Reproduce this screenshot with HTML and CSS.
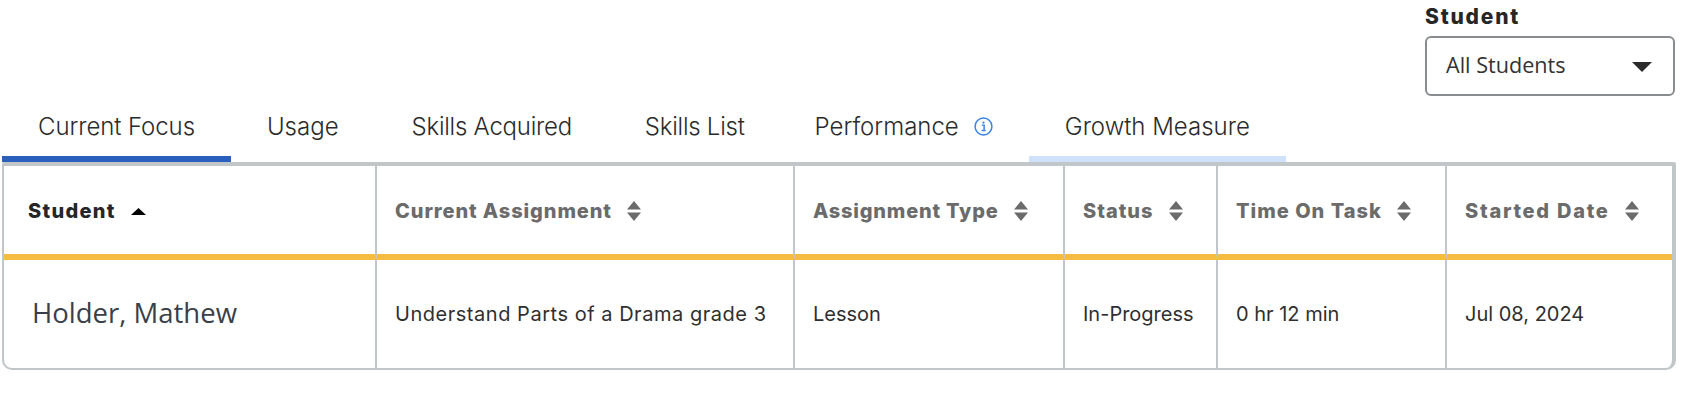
FILE: index.html
```html
<!DOCTYPE html>
<html lang="en">
<head>
<meta charset="utf-8">
<title>Current Focus</title>
<link rel="stylesheet" href="styles.css">
</head>
<body>
<div class="filter-bar">
  <div class="filter">
    <div class="filter-label">Student</div>
    <div class="select">
      <span class="select-text">All Students</span>
      <svg class="select-caret" width="20" height="10" viewBox="0 0 20 10"><path d="M0 0H20L10 10Z"/></svg>
    </div>
  </div>
</div>
<nav class="tabs">
  <div class="tab active tab-tight">Current Focus</div>
  <div class="tab">Usage</div>
  <div class="tab tab-narrow tab-acquired">Skills Acquired</div>
  <div class="tab tab-narrow tab-list">Skills List</div>
  <div class="tab">Performance
    <svg class="info" width="19" height="19" viewBox="0 0 18 18"><circle cx="9" cy="9" r="8" fill="none" stroke="#3b82e8" stroke-width="1.4"/><circle cx="9" cy="5.3" r="1.1" fill="#3b82e8"/><path d="M7.3 7.7H9.6V12.6M7.2 12.8H11" fill="none" stroke="#3b82e8" stroke-width="1.4"/></svg>
  </div>
  <div class="tab hover">Growth Measure</div>
</nav>
<div class="table-wrap">
  <table class="report">
    <thead>
      <tr>
        <th class="sorted"><span class="th-in">Student <svg class="sort" width="15" height="20" viewBox="0 0 15 20"><path d="M0 14H15L7.5 7Z"/></svg></span></th>
        <th class="th-current"><span class="th-in">Current Assignment <svg class="sort" width="14" height="20" viewBox="0 0 14 20"><path d="M0 8.5H14L7 0ZM0 11.5H14L7 20Z"/></svg></span></th>
        <th class="th-type"><span class="th-in">Assignment Type <svg class="sort" width="14" height="20" viewBox="0 0 14 20"><path d="M0 8.5H14L7 0ZM0 11.5H14L7 20Z"/></svg></span></th>
        <th><span class="th-in">Status <svg class="sort" width="14" height="20" viewBox="0 0 14 20"><path d="M0 8.5H14L7 0ZM0 11.5H14L7 20Z"/></svg></span></th>
        <th><span class="th-in">Time On Task <svg class="sort" width="14" height="20" viewBox="0 0 14 20"><path d="M0 8.5H14L7 0ZM0 11.5H14L7 20Z"/></svg></span></th>
        <th class="th-date"><span class="th-in">Started Date <svg class="sort" width="14" height="20" viewBox="0 0 14 20"><path d="M0 8.5H14L7 0ZM0 11.5H14L7 20Z"/></svg></span></th>
      </tr>
    </thead>
    <tbody>
      <tr>
        <td class="name">Holder, Mathew</td>
        <td class="assignment">Understand Parts of a Drama grade 3</td>
        <td>Lesson</td>
        <td>In-Progress</td>
        <td>0 hr 12 min</td>
        <td>Jul 08, 2024</td>
      </tr>
    </tbody>
  </table>
</div>
</body>
</html>
```
FILE: styles.css
```css
* { box-sizing: border-box; }
html, body { margin: 0; padding: 0; background: #fff; }
body { width: 1692px; height: 406px; overflow: hidden; font-family: "Inter", sans-serif; color: #2b2b2b; }

.filter-bar { display: flex; justify-content: flex-end; padding: 5px 17px 0 0; }
.filter { width: 250px; }
.filter-label { font-size: 21px; font-weight: 800; line-height: 24px; letter-spacing: 1.8px; color: #262626; height: 31px; }
.select { height: 60px; border: 2px solid #8a8d8f; border-radius: 6px; display: flex; align-items: center; justify-content: space-between; padding: 0 21px 0 19px; font-family: "Open Sans", sans-serif; font-size: 21.6px; color: #333; }
.select-text { margin-top: -4px; }
.select-caret { fill: #2b2b2b; margin-top: 1px; }

.tabs { display: flex; margin: 1px 0 0 2px; }
.tab { height: 65px; padding: 0 36px; display: flex; align-items: center; gap: 15px; border-bottom: 6px solid transparent; font-size: 24px; font-weight: 300; color: #2b2b2b; white-space: nowrap; }
.tab.active { border-bottom-color: #2a5fbd; }
.tab.hover { border-bottom-color: #d0e1fb; }
.tab-tight { letter-spacing: -0.08px; }
.tab-narrow { letter-spacing: -0.25px; }
.tab-acquired { padding-left: 37px; }
.tab-list { padding: 0 34px 0 37px; }
.info { flex: none; }

.table-wrap { margin: 0 16px 0 2px; width: 1674px; height: 208px; border: solid #c1c6c9; border-width: 4px 4px 2px 2px; border-radius: 2px 2px 10px 10px; overflow: hidden; }
.report { border-collapse: separate; border-spacing: 0; table-layout: fixed; width: 1668px; }
.report th:nth-child(1) { width: 373px; }
.report th:nth-child(2) { width: 418px; }
.report th:nth-child(3) { width: 270px; }
.report th:nth-child(4) { width: 153px; }
.report th:nth-child(5) { width: 229px; }
.report th, .report td { border-right: 2px solid #c1c6c9; padding: 0 0 0 18px; text-align: left; white-space: nowrap; }
.report th:last-child, .report td:last-child { border-right: 0; }
.report th { height: 94px; padding-top: 2px; border-bottom: 6px solid #f5bc3f; font-size: 20px; font-weight: 800; letter-spacing: 1px; color: #6b6b6b; }
.report th.sorted { color: #262626; padding-left: 24px; letter-spacing: 1.3px; }
.report th.th-current { letter-spacing: 0.9px; }
.report th.th-type { letter-spacing: 0.78px; }
.report th.th-date { letter-spacing: 1.73px; }
.th-in { display: flex; align-items: center; gap: 15px; }
.sort { flex: none; fill: currentColor; }
.report th.sorted .sort { fill: #000; }
.report td { height: 108px; font-size: 20px; font-weight: 400; color: #2f2f2f; }
.report td.assignment { letter-spacing: 0.53px; }
.report td.name { font-family: "Open Sans", sans-serif; font-size: 27.5px; color: #3a3f4a; padding: 0 0 4px 28px; }
```
